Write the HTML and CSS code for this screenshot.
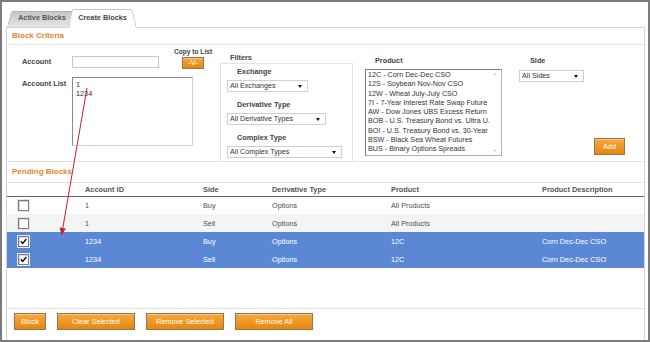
FILE: index.html
```html
<html>
    <head>
        <link rel="stylesheet" href="styles.css">
    </head>
    <body>
        <div class="page">
            <div class="frame">
                <div class="tabs">
                    <div class="tab">Active Blocks</div>
                    <div class="tab tab-current">Create Blocks</div>
                </div>
                <div class="panel">
                    <div class="section-title">Block Criteria</div>
                    <div class="criteria">
                        <!-- accounts -->
                        <div class="accounts">
                            <div class="copy-label">Copy to List</div>
                            <div class="field-label lbl-account">Account</div>
                            <div class="textbox"></div>
                            <button class="btn btn-copy">-V-</button>
                            <div class="field-label lbl-list">Account List</div>
                            <div class="textarea">1<br>1234</div>
                        </div>
                        <!-- filters -->
                        <div class="filters">
                            <div class="col-label">Filters</div>
                            <div class="filter-box">
                                <div class="filter-label">Exchange</div>
                                <div class="select w-exchange">All Exchanges</div>
                                <div class="filter-label">Derivative Type</div>
                                <div class="select w-derivative">All Derivative Types</div>
                                <div class="filter-label">Complex Type</div>
                                <div class="select w-complex">All Complex Types</div>
                            </div>
                        </div>
                        <!-- product -->
                        <div class="product">
                            <div class="col-label">Product</div>
                            <div class="listbox">
                                <ul>
                                    <li>12C - Corn Dec-Dec CSO</li>
                                    <li>12S - Soybean Nov-Nov CSO</li>
                                    <li>12W - Wheat July-July CSO</li>
                                    <li>7I - 7-Year Interest Rate Swap Future</li>
                                    <li>AW - Dow Jones UBS Excess Return</li>
                                    <li>BOB - U.S. Treasury Bond vs. Ultra U.</li>
                                    <li>BOI - U.S. Treasury Bond vs. 30-Year</li>
                                    <li>BSW - Black Sea Wheat Futures</li>
                                    <li>BUS - Binary Options Spreads</li>
                                </ul>
                                <div class="scroll"><span class="up"></span><span class="down"></span></div>
                            </div>
                        </div>
                        <!-- side -->
                        <div class="side">
                            <div class="col-label">Side</div>
                            <div class="select w-side">All Sides</div>
                        </div>
                        <button class="btn btn-add">Add</button>
                    </div>
                    <div class="section-title pending">Pending Blocks</div>
                    <div class="table-wrap">
                        <table class="blocks">
                            <colgroup>
                                <col style="width:78px">
                                <col style="width:118px">
                                <col style="width:69px">
                                <col style="width:119px">
                                <col style="width:151px">
                                <col>
                            </colgroup>
                            <thead>
                                <tr>
                                    <th></th>
                                    <th>Account ID</th>
                                    <th>Side</th>
                                    <th>Derivative Type</th>
                                    <th>Product</th>
                                    <th>Product Description</th>
                                </tr>
                            </thead>
                            <tbody>
                                <tr>
                                    <td class="check"><span class="cb"></span></td>
                                    <td>1</td><td>Buy</td><td>Options</td><td>All Products</td><td></td>
                                </tr>
                                <tr class="alt">
                                    <td class="check"><span class="cb"></span></td>
                                    <td>1</td><td>Sell</td><td>Options</td><td>All Products</td><td></td>
                                </tr>
                                <tr class="sel">
                                    <td class="check"><span class="cb"><svg width="9" height="9" viewBox="0 0 9 9"><path d="M1.8 4.3 L3.7 6.4 L7.3 2" fill="none" stroke="#000" stroke-width="1.3"/></svg></span></td>
                                    <td>1234</td><td>Buy</td><td>Options</td><td>12C</td><td>Corn Dec-Dec CSO</td>
                                </tr>
                                <tr class="sel">
                                    <td class="check"><span class="cb"><svg width="9" height="9" viewBox="0 0 9 9"><path d="M1.8 4.3 L3.7 6.4 L7.3 2" fill="none" stroke="#000" stroke-width="1.3"/></svg></span></td>
                                    <td>1234</td><td>Sell</td><td>Options</td><td>12C</td><td>Corn Dec-Dec CSO</td>
                                </tr>
                            </tbody>
                        </table>
                    </div>
                    <div class="footer">
                        <button class="btn btn-block">Block</button>
                        <button class="btn btn-wide">Clear Selected</button>
                        <button class="btn btn-wide">Remove Selected</button>
                        <button class="btn btn-wide">Remove All</button>
                    </div>
                </div>
            </div>
            <!-- annotation arrow drawn over the page -->
            <svg class="arrow" width="650" height="342" viewBox="0 0 650 342">
                <line x1="87" y1="88" x2="62.7" y2="228.5" stroke="#c4242b" stroke-width="1"/>
                <polygon points="61.5,235.5 65.8,228.4 59.6,227.4" fill="#c4242b"/>
            </svg>
        </div>
    </body>
</html>
```

FILE: styles.css
```css
body {
    margin: 0;
    font-family: "Liberation Sans", Arial, sans-serif;
    font-size: 7.3px;
    color: #444;
    background: #fff;
}

.page {
    position: relative;
    width: 650px;
    height: 342px;
}

.frame {
    box-sizing: border-box;
    width: 650px;
    height: 342px;
    border: 2px solid #7b7b7b;
    display: flex;
    flex-direction: column;
}

/* tabs */
.tabs {
    display: flex;
    align-items: flex-end;
    height: 26px;
    margin-bottom: -1px;
    padding-left: 5px;
    flex-shrink: 0;
}

.tab {
    position: relative;
    z-index: 1;
    width: 70px;
    height: 16px;
    margin-bottom: 1px;
    line-height: 13px;
    text-align: center;
    font-weight: bold;
    color: #555;
}

.tab::before,
.tab::after {
    content: "";
    position: absolute;
    top: 0;
    bottom: 0;
    width: 55%;
    z-index: -1;
    background: linear-gradient(#c6c6c6, #e6e6e6);
    border: 1px solid #b3b3b3;
    border-bottom: none;
    transform-origin: bottom;
}

.tab::before {
    left: 0;
    border-right: none;
    border-radius: 3px 0 0 0;
    transform: skewX(-14deg);
}

.tab::after {
    right: 0;
    border-left: none;
    border-radius: 0 3px 0 0;
    transform: skewX(14deg);
}

.tab-current {
    z-index: 2;
    width: 69px;
    height: 19px;
    margin-left: -9px;
    margin-bottom: 0;
    line-height: 17px;
    color: #444;
}

.tab-current::before,
.tab-current::after {
    background: #fff;
    border-color: #c4c4c4;
}

.tab-current::before {
    transform: skewX(-11deg);
}

.tab-current::after {
    transform: skewX(14deg);
}

/* panel */
.panel {
    flex: 1;
    display: flex;
    flex-direction: column;
    margin: 0 3px 0 4px;
    border: 1px solid #d4d4d4;
    border-bottom: none;
}

.section-title {
    height: 16px;
    line-height: 16px;
    padding-left: 5px;
    font-size: 8px;
    font-weight: bold;
    color: #e0862a;
    border-bottom: 1px solid #e3e3e3;
}

.section-title.pending {
    height: 20px;
    line-height: 19px;
    border-top: 1px solid #e3e3e3;
}

.criteria {
    display: flex;
    height: 116px;
    padding-left: 15px;
    flex-shrink: 0;
}

.field-label,
.col-label,
.filter-label {
    font-weight: bold;
    color: #444;
}

/* accounts */
.accounts {
    display: grid;
    grid-template-columns: 50px 87px 15px 38px;
    grid-template-rows: 9px 12px 1fr;
    align-items: start;
    padding-top: 2px;
}

.copy-label {
    grid-column: 4;
    grid-row: 1;
    font-size: 6.6px;
    font-weight: bold;
    line-height: 9px;
    text-align: center;
    white-space: nowrap;
}

.lbl-account {
    grid-column: 1;
    grid-row: 2;
    line-height: 12px;
}

.textbox {
    grid-column: 2;
    grid-row: 2;
    box-sizing: border-box;
    width: 87px;
    height: 12px;
    border: 1px solid #c9c9c9;
    background: #fff;
}

.btn-copy {
    grid-column: 4;
    grid-row: 2;
    justify-self: center;
    width: 22px;
    height: 12px !important;
    margin-top: 1px;
    line-height: 8px;
    font-size: 6.5px;
}

.lbl-list {
    grid-column: 1;
    grid-row: 3;
    margin-top: 11px;
}

.textarea {
    grid-column: 2 / 5;
    grid-row: 3;
    box-sizing: border-box;
    width: 121px;
    height: 69px;
    margin-top: 9px;
    padding: 2px 3px;
    line-height: 9px;
    color: #333;
    border: 1px solid #d2d2d2;
    border-top-color: #8a8a8a;
    border-left-color: #8a8a8a;
}

/* filters */
.filters {
    box-sizing: border-box;
    width: 133px;
    margin-left: 8px;
    padding-top: 8px;
    display: flex;
    flex-direction: column;
}

.col-label {
    line-height: 10px;
    padding-left: 10px;
}

.filter-box {
    flex: 1;
    padding: 3px 0 0 6px;
    border: 1px solid #e2e2e2;
    border-bottom: none;
}

.filter-label {
    line-height: 10px;
    padding-left: 10px;
    margin-bottom: 3px;
}

.select + .filter-label {
    margin-top: 8px;
}

.select {
    position: relative;
    box-sizing: border-box;
    height: 12px;
    line-height: 10px;
    padding-left: 2px;
    font-size: 7.2px;
    color: #333;
    background: #fff;
    border: 1px solid #cfcfcf;
}

.select::after {
    content: "";
    position: absolute;
    right: 5px;
    top: 4px;
    border-left: 2.5px solid transparent;
    border-right: 2.5px solid transparent;
    border-top: 3px solid #111;
}

.w-exchange { width: 81px; }
.w-derivative { width: 99px; }
.w-complex { width: 115px; }
.w-side { width: 65px; }

/* product */
.product {
    width: 137px;
    margin-left: 12px;
    padding-top: 11px;
}

.product .col-label,
.side .col-label {
    line-height: 9px;
    margin-bottom: 4px;
}

.side .col-label {
    margin-bottom: 5px;
    padding-left: 11px;
}

.listbox {
    display: flex;
    box-sizing: border-box;
    height: 87px;
    background: #fff;
    border: 1px solid #b0b0b0;
    border-top-color: #7c7c7c;
    border-left-color: #7c7c7c;
}

.listbox ul {
    flex: 1;
    margin: 0;
    padding: 0 0 0 2px;
    list-style: none;
    overflow: hidden;
    white-space: nowrap;
    line-height: 9.28px;
    font-size: 7.2px;
    color: #333;
}

.scroll {
    width: 12px;
    display: flex;
    flex-direction: column;
    justify-content: space-between;
    align-items: center;
    padding: 3px 0;
}

.scroll span {
    border-left: 2px solid transparent;
    border-right: 2px solid transparent;
}

.scroll .up {
    border-bottom: 2.5px solid #cfcfcf;
}

.scroll .down {
    border-top: 2.5px solid #cfcfcf;
}

/* side */
.side {
    margin-left: 17px;
    padding-top: 11px;
}

/* buttons */
.btn {
    box-sizing: border-box;
    height: 17px;
    padding: 0;
    font-family: inherit;
    font-size: 7.3px;
    color: #fff;
    background: linear-gradient(#f7a93d, #e5870f);
    border: 1px solid #8e7656;
    box-shadow: inset 0 1px 0 #fcc77c;
    cursor: pointer;
}

.btn-add {
    width: 31px;
    margin-left: 10px;
    margin-bottom: 6px;
    align-self: flex-end;
}

.btn-block { width: 32px; }
.btn-wide { width: 78px; }

/* pending table */
.table-wrap {
    flex: 1;
}

.blocks {
    width: 637px;
    border-collapse: collapse;
    table-layout: fixed;
    font-size: 7.3px;
}

.blocks th {
    height: 13px;
    padding: 0;
    text-align: left;
    font-weight: bold;
    font-size: 7.4px;
    color: #555;
    border-bottom: 1px solid #666;
}

.blocks td {
    height: 18px;
    padding: 0;
    font-size: 7.3px;
    color: #505050;
    white-space: nowrap;
}

.blocks tr.alt td {
    background: #f3f4f6;
}

.blocks tr.sel td {
    background: #5b88d5;
    color: #fff;
}

.blocks td.check {
    padding-left: 11px;
}

.cb {
    display: inline-block;
    vertical-align: middle;
    width: 9px;
    height: 9px;
    background: #fff;
    border: 1px solid #7d7d7d;
    box-shadow: 0 0 0 1px #e6e6e6, inset 1px 1px 0 #d6d6d6;
}

.cb svg {
    display: block;
}

.footer {
    box-sizing: border-box;
    height: 32px;
    display: flex;
    align-items: flex-start;
    gap: 11px;
    padding: 4px 0 0 7px;
    border-top: 1px solid #e0e0e0;
}

.arrow {
    position: absolute;
    left: 0;
    top: 0;
    pointer-events: none;
}
```
